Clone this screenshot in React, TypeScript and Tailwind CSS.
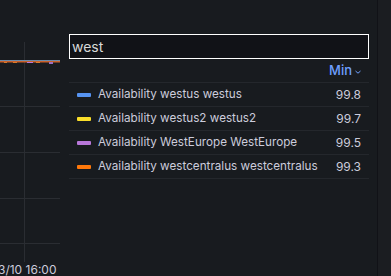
import React from 'react';

const series = [
  { name: 'Availability westus westus', color: '#5794f2', value: '99.8' },
  { name: 'Availability westus2 westus2', color: '#fade2a', value: '99.7' },
  { name: 'Availability WestEurope WestEurope', color: '#b877d9', value: '99.5' },
  { name: 'Availability westcentralus westcentralus', color: '#ff780a', value: '99.3' },
];

function Chart() {
  return (
    <div className="relative w-[69px] h-full shrink-0">
      <svg width="69" height="276" className="absolute left-0 top-0">
        {/* grid */}
        <line x1="24.5" y1="42" x2="24.5" y2="262" stroke="#2a2d32" strokeWidth="1" />
        {[106, 152, 198, 243].map((y) => (
          <line key={y} x1="0" y1={y + 0.5} x2="60" y2={y + 0.5} stroke="#2a2d32" strokeWidth="1" />
        ))}
        {/* series */}
        <line x1="0" y1="61.5" x2="60" y2="61.5" stroke="#c8602a" strokeWidth="2" />
        <line x1="0" y1="60.5" x2="60" y2="60.5" stroke="#6f8aa8" strokeWidth="1" />
        <rect x="4" y="62" width="3" height="1" fill="#d97a2a" />
        <rect x="13" y="62" width="4" height="1" fill="#d97a2a" />
        <rect x="27" y="62" width="6" height="1" fill="#b877d9" />
        <rect x="36" y="62" width="4" height="1" fill="#d97a2a" />
        <rect x="49" y="62" width="4" height="2" fill="#9a6fc0" />
      </svg>
      <div className="absolute left-[-2px] top-[262px] text-[12px] leading-[16px] text-[#ccccdc] whitespace-nowrap">
        3/10 16:00
      </div>
    </div>
  );
}

export default function App() {
  return (
    <div className="w-[391px] h-[276px] bg-[#181b1f] flex overflow-hidden font-['Inter',sans-serif]">
      <Chart />
      <div className="w-[300px] shrink-0 pt-[34px] flex flex-col">
        <div className="h-[25px] border border-white bg-[#111217] flex items-center pl-[2px] text-[14px] text-[#d8d9da]">
          west
        </div>
        <div className="h-[24px] border-b border-[#24272c] flex items-center justify-end pr-[7px] text-[#6e9fff] text-[13px] font-medium">
          Min
          <svg width="8" height="8" viewBox="0 0 8 8" className="ml-[2px] mt-[3px]">
            <path d="M1.5 3 L4 5.2 L6.5 3" stroke="#6e9fff" strokeWidth="1" fill="none" />
          </svg>
        </div>
        {series.map((s) => (
          <div key={s.name} className="h-[24px] border-b border-[#24272c] flex items-center pl-[8px] pr-[8px] text-[11.7px] text-[#ccccdc]">
            <span className="w-[14px] h-[4px] rounded-[1px] shrink-0" style={{ backgroundColor: s.color }} />
            <span className="ml-[7px] flex-1 whitespace-nowrap">{s.name}</span>
            <span className="text-[12px]">{s.value}</span>
          </div>
        ))}
      </div>
      <div className="ml-[8px] w-px h-full bg-[#111217]" />
      <div className="flex-1 h-full bg-[#1b1d21]" />
    </div>
  );
}
